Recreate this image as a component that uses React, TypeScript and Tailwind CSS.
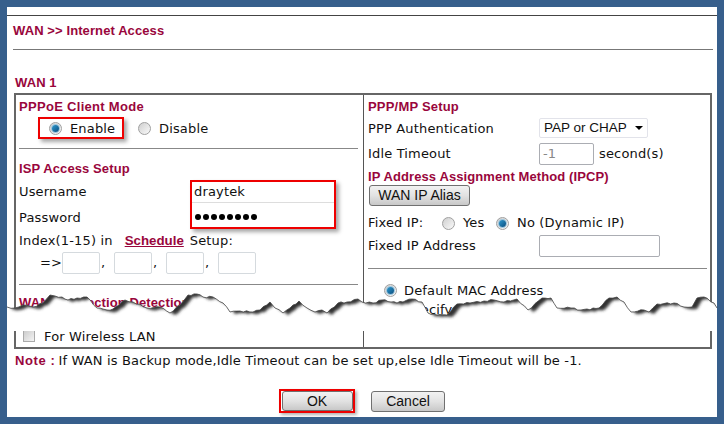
const body = "font-['DejaVu_Sans',Verdana,sans-serif] text-[13px] tracking-[0.16px] text-[#111]"
const head = "font-['Liberation_Sans',Arial,sans-serif] font-bold text-[13px] tracking-[0.1px] text-[#99063c]"

const tearPts: [number, number][] = [
  [7, 307], [15, 308], [23, 305], [33, 307], [43, 303], [50, 295], [55, 296], [62, 297], [68, 300], [77, 298], [87, 297],
  [97, 308], [107, 310], [113, 309], [125, 300], [133, 302], [147, 308], [160, 307], [170, 313], [180, 305], [188, 295],
  [197, 294], [203, 297], [213, 297], [223, 303], [230, 312], [240, 311], [253, 312], [260, 310], [270, 302], [275, 308],
  [283, 313], [290, 308], [299, 301], [307, 308], [315, 312], [322, 310], [327, 313], [338, 303], [347, 302], [358, 299],
  [362, 302], [373, 303], [382, 300], [397, 303], [412, 299], [422, 302], [428, 313], [437, 315], [447, 315], [457, 304],
  [470, 303], [484, 301], [494, 300], [504, 302], [517, 299], [528, 310], [542, 298], [551, 298], [557, 308], [571, 308],
  [581, 310], [599, 308], [609, 298], [617, 297], [624, 302], [631, 312], [644, 310], [649, 312], [657, 304], [674, 303],
  [684, 307], [692, 307], [697, 298], [704, 297], [714, 303], [717, 308],
]

// break the long segments up a bit so the edge looks torn rather than polygonal
const rough: string[] = []
tearPts.forEach(([x, y], i) => {
  const next = tearPts[i + 1]
  rough.push(`${x},${y}`)
  if (!next) return
  const steps = Math.floor((next[0] - x) / 3)
  for (let s = 1; s < steps; s++) {
    const t = s / steps
    const wobble = Math.sin(x * 1.7 + s * 2.3) * 0.8
    rough.push(`${(x + (next[0] - x) * t).toFixed(1)},${(y + (next[1] - y) * t + wobble).toFixed(1)}`)
  }
})
const line = rough.join(' ')
const lower = `${line} 717,331 7,331`
const upper = `${line} 730,280 0,280`

function Radio({ on }: { on?: boolean }) {
  return (
    <span className="flex h-[13px] w-[13px] shrink-0 items-center justify-center rounded-full border border-[#a0a0a0] bg-gradient-to-br from-[#cfcfcf] to-[#fafafa]">
      {on && <span className="h-[7px] w-[7px] rounded-full bg-gradient-to-br from-[#2f9ad0] to-[#0a4f80] ring-1 ring-[#9cc6de]" />}
    </span>
  )
}

function SmallInput({ w }: { w: string }) {
  return <span className={`flex h-[22px] items-center rounded-[2px] border border-[#d5dade] ${w}`} />
}

function Field({ className, value }: { className: string; value?: string }) {
  return <span className={`flex h-[22px] items-center rounded-[2px] border border-[#abadb3] pl-[3px] text-[#888] ${className}`}>{value}</span>
}

function Btn({ className, label }: { className: string; label: string }) {
  return (
    <span className={`flex items-center justify-center rounded-[3px] border border-[#707070] bg-gradient-to-b from-[#f2f2f2] via-[#e2e2e2] to-[#c8c8c8] font-['Liberation_Sans',Arial,sans-serif] text-[14px] tracking-normal text-[#111] ${className}`}>
      {label}
    </span>
  )
}

export default function App() {
  return (
    <div className={`relative h-[424px] w-[724px] overflow-hidden bg-[#375f8c] p-[7px] ${body}`}>
      <div className="h-[410px] w-[710px] bg-white">
        <div className="h-[8px]" />
        <div className="h-px bg-[#444]" />

        {/* Title */}
        <div className={`ml-[6px] flex h-[33px] items-center pb-[4px] ${head}`}>WAN &gt;&gt; Internet Access</div>
        <div className="mx-[6px] h-[1px] w-[700px] bg-[#777]" />

        <div className={`ml-[8px] mt-[22px] flex h-[21px] items-center ${head}`}>WAN 1</div>

        {/* Main table */}
        <div className="ml-[7px] flex h-[256px] w-[698px] border-2 border-[#666]">
          <div className="flex w-[348px] flex-col border-r border-[#555] pl-[3px]">
            <div className={`flex h-[22px] items-center pt-[2px] ${head} tracking-[0.3px]`}>PPPoE Client Mode</div>
            <div className="flex h-[22px] items-center">
              <div className="ml-[19px] flex h-[22px] w-[86px] items-center border-2 border-[#ee0000] pl-[9px] shadow-[3px_3px_4px_rgba(0,0,0,0.35)]">
                <Radio on />
                <span className="ml-[8px] pt-[2px]">Enable</span>
              </div>
              <span className="ml-[14px]"><Radio /></span>
              <span className="ml-[8px] pt-[2px]">Disable</span>
            </div>
            <div className="mt-[9px] h-px w-[339px] bg-[#888]" />
            <div className={`mt-[8px] flex h-[22px] items-center pt-[2px] ${head}`}>ISP Access Setup</div>
            <div className="mt-px flex h-[49px]">
              <div className="flex w-[171px] flex-col">
                <span className="mt-[1px] flex h-[21px] items-center">Username</span>
                <span className="mt-[5px] flex h-[21px] items-center">Password</span>
              </div>
              <div className="flex h-[49px] w-[146px] flex-col border-2 border-[#ee0000] shadow-[3px_3px_4px_rgba(0,0,0,0.35)]">
                <span className="flex h-[21px] items-center border-b border-[#ddd] pl-[2px]">draytek</span>
                <span className="mt-[4px] flex h-[21px] items-center gap-[2px] pl-[3px]">
                  {[0, 1, 2, 3, 4, 5, 6, 7].map(i => <span key={i} className="h-[6px] w-[6px] rounded-full bg-black" />)}
                </span>
              </div>
            </div>
            <div className="flex h-[23px] items-center">
              <span>Index(1-15) in</span>
              <span className="ml-[12px] font-['Liberation_Sans',Arial,sans-serif] text-[13.3px] font-bold tracking-normal text-[#99063c] underline">Schedule</span>
              <span className="ml-[6px]">Setup:</span>
            </div>
            <div className="flex h-[22px] items-center">
              <span className="ml-[21px] w-[22px]">=&gt;</span>
              <SmallInput w="w-[38px]" />
              <span className="w-[14px] pl-[1px]">,</span>
              <SmallInput w="w-[38px]" />
              <span className="w-[14px] pl-[1px]">,</span>
              <SmallInput w="w-[38px]" />
              <span className="w-[14px] pl-[1px]">,</span>
              <SmallInput w="w-[38px]" />
            </div>
            <div className="mt-[10px] h-px w-[339px] bg-[#888]" />
            <div className={`mt-[7px] flex h-[22px] items-center ${head}`}>WAN Connection Detection</div>
            <div className="mt-auto flex h-[22px] items-center pl-[4px]">
              <span className="h-[12px] w-[12px] border border-[#aaa] bg-gradient-to-br from-[#ccc] to-[#f4f4f4]" />
              <span className="ml-[9px] pt-[2px]">For Wireless LAN</span>
            </div>
          </div>

          <div className="flex flex-1 flex-col pl-[4px]">
            <div className={`flex h-[22px] items-center pt-[2px] ${head} tracking-[0.2px]`}>PPP/MP Setup</div>
            <div className="flex h-[22px] items-center">
              <span className="w-[171px] pt-[2px]">PPP Authentication</span>
              <span className="flex h-[20px] w-[109px] items-center justify-between rounded-[2px] border border-[#e2e3ea] pl-[4px] pr-[4px] font-['Liberation_Sans',Arial,sans-serif] text-[13.5px] tracking-normal">
                PAP or CHAP
                <span className="border-x-[4px] border-t-[4px] border-x-transparent border-t-black" />
              </span>
            </div>
            <div className="mt-[4px] flex h-[22px] items-center">
              <span className="w-[171px]">Idle Timeout</span>
              <Field className="w-[55px]" value="-1" />
              <span className="ml-[5px]">second(s)</span>
            </div>
            <div className={`flex h-[22px] items-center pt-[2px] ${head}`}>IP Address Assignment Method (IPCP)</div>
            <div className="mt-[-2px] flex h-[21px] items-center pl-px">
              <Btn className="h-[21px] w-[101px]" label="WAN IP Alias" />
            </div>
            <div className="mt-[6px] flex h-[22px] items-center">
              <span className="w-[74px]">Fixed IP:</span>
              <Radio />
              <span className="ml-[8px] w-[34px]">Yes</span>
              <span className="ml-[-1px]"><Radio on /></span>
              <span className="ml-[8px]">No (Dynamic IP)</span>
            </div>
            <div className="mt-px flex h-[22px] items-center">
              <span className="w-[171px]">Fixed IP Address</span>
              <Field className="w-[121px]" />
            </div>
            <div className="mt-[11px] h-px w-[339px] bg-[#888]" />
            <div className="mt-[11px] flex h-[21px] items-center pl-[16px]">
              <Radio on />
              <span className="ml-[7px]">Default MAC Address</span>
            </div>
            <div className="flex h-[18px] items-center pl-[36px]">Specify</div>
          </div>
        </div>

        {/* Note */}
        <div className="ml-[8px] mt-[2px] flex h-[20px] items-center">
          <span className={`${head} tracking-[0.6px]`}>Note :</span>
          <span className="ml-[3px]">If WAN is Backup mode,Idle Timeout can be set up,else Idle Timeout will be -1.</span>
        </div>

        {/* Buttons */}
        <div className="ml-[272px] mt-[18px] flex items-center">
          <div className="flex h-[24px] w-[76px] items-center justify-center border-2 border-[#ee0000] shadow-[2px_2px_3px_rgba(0,0,0,0.3)]">
            <Btn className="h-[20px] w-[71px]" label="OK" />
          </div>
          <Btn className="ml-[16px] h-[21px] w-[74px]" label="Cancel" />
        </div>
      </div>

      {/* torn screenshot edge */}
      <svg className="absolute left-0 top-0" width="724" height="424" viewBox="0 0 724 424">
        <defs>
          <clipPath id="tearClip"><polygon points={lower} /></clipPath>
          <filter id="tearBlur" x="-5%" y="-50%" width="110%" height="200%"><feGaussianBlur stdDeviation="1.4" /></filter>
        </defs>
        <polygon points={lower} fill="#fff" />
        <g clipPath="url(#tearClip)">
          <polygon points={upper} transform="translate(5 2)" fill="#333" filter="url(#tearBlur)" />
        </g>
        <polyline points={line} fill="none" stroke="#444" strokeWidth="0.8" />
      </svg>
    </div>
  )
}
